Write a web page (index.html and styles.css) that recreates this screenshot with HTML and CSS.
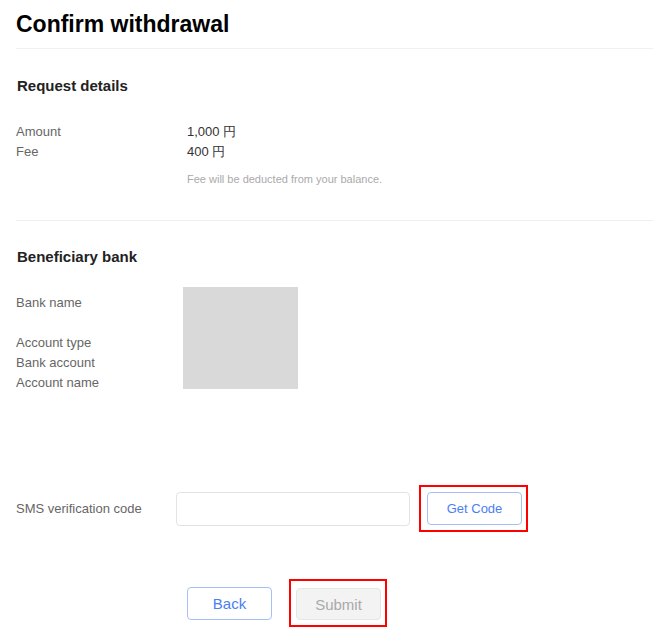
FILE: index.html
```html
<!DOCTYPE html>
<html lang="en">
<head>
<meta charset="utf-8">
<title>Confirm withdrawal</title>
<link rel="stylesheet" href="styles.css">
</head>
<body>
<div class="page">
  <h1 class="title">Confirm withdrawal</h1>
  <div class="divider"></div>

  <section class="section request">
    <h2 class="section-title">Request details</h2>
    <div class="kv">
      <div class="kv-row"><span class="label">Amount</span><span class="value">1,000 円</span></div>
      <div class="kv-row"><span class="label">Fee</span><span class="value">400 円</span></div>
      <div class="note">Fee will be deducted from your balance.</div>
    </div>
  </section>
  <div class="divider divider-2"></div>

  <section class="section bank">
    <h2 class="section-title">Beneficiary bank</h2>
    <div class="bank-row">
      <div class="bank-labels">
        <span class="label">Bank name</span>
        <span class="label gap-before">Account type</span>
        <span class="label">Bank account</span>
        <span class="label">Account name</span>
      </div>
      <div class="masked"></div>
    </div>
  </section>

  <div class="sms-row">
    <span class="label sms-label">SMS verification code</span>
    <input class="code-input" type="text">
    <span class="highlight highlight-code"><button class="btn btn-outline btn-code" type="button">Get Code</button></span>
  </div>

  <div class="actions">
    <button class="btn btn-outline btn-action" type="button">Back</button>
    <span class="highlight highlight-submit"><button class="btn btn-disabled btn-action" type="button">Submit</button></span>
  </div>
</div>
</body>
</html>
```

FILE: styles.css
```css
* { box-sizing: border-box; }
html, body { margin: 0; padding: 0; background: #fff; }
body { font-family: "Liberation Sans", Arial, sans-serif; color: #333; }

.page { padding-left: 16px; }

.title {
  margin: 0;
  padding-top: 10px;
  font-size: 23px;
  line-height: 28px;
  font-weight: bold;
  color: #000;
}

.divider { height: 1px; background: #f0f0f0; margin-top: 10px; }
.divider-2 { margin-top: 33px; }

.section-title {
  margin: 26px 0 0 1px;
  font-size: 15px;
  line-height: 20px;
  font-weight: bold;
  color: #222;
}
.section.request .section-title { margin-top: 27px; }

.kv { margin-top: 26px; }
.kv-row { display: flex; font-size: 13px; line-height: 20px; }
.label { color: #666; font-size: 13px; line-height: 20px; }
.kv-row .label { width: 171px; }
.value { color: #333; }
.note {
  margin: 9px 0 0 171px;
  font-size: 11px;
  line-height: 16px;
  color: #aaa;
}

.bank-row { display: flex; margin-top: 20px; }
.bank-labels {
  width: 167px;
  display: flex;
  flex-direction: column;
  padding-top: 6px;
}
.gap-before { margin-top: 20px; }
.masked { width: 115px; height: 102px; background: #d9d9d9; }

.sms-row {
  display: flex;
  align-items: center;
  margin-top: 92px;
}
.sms-label { width: 160px; }
.code-input {
  width: 234px;
  height: 34px;
  border: 1px solid #e3e3e3;
  border-radius: 4px;
  background: #fff;
  outline: none;
  font: inherit;
}

.highlight { display: inline-flex; border: 2px solid #f00; }
.highlight-code { margin-left: 9px; padding: 5px 4px 5px 6px; }
.highlight-submit { margin-left: 17px; padding: 7px 4px 5px 5px; }

.btn {
  font-family: "Liberation Sans", Arial, sans-serif;
  border-radius: 4px;
  padding: 0;
  cursor: pointer;
}
.btn-outline {
  background: #fff;
  border: 1px solid #a6c0f6;
  color: #4b7ef2;
}
.btn-code { width: 95px; height: 33px; font-size: 13px; }
.btn-action { width: 85px; height: 33px; font-size: 15px; }
.btn-disabled {
  background: #f3f3f3;
  border: 1px solid #e6e6e6;
  color: #a9a9a9;
  height: 32px;
}

.actions {
  display: flex;
  align-items: center;
  margin-top: 47px;
  padding-left: 171px;
}
```
